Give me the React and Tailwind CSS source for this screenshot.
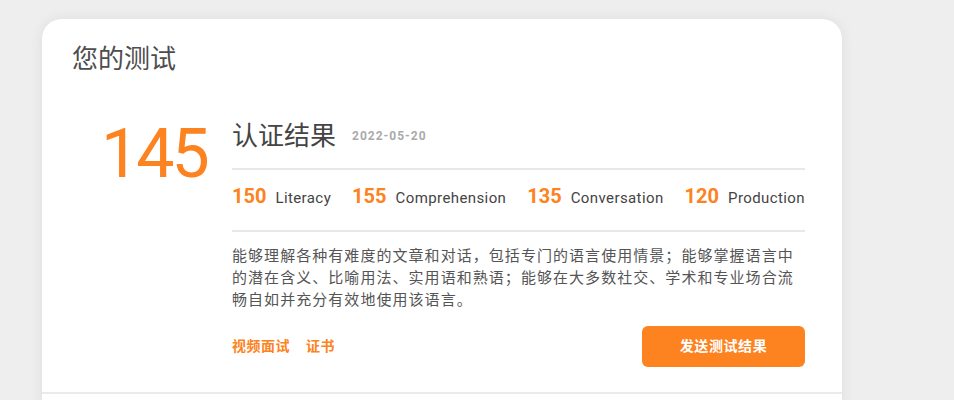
export default function App() {
  const scores = [
    { n: 150, label: 'Literacy' },
    { n: 155, label: 'Comprehension' },
    { n: 135, label: 'Conversation' },
    { n: 120, label: 'Production' },
  ];

  return (
    <div
      className="min-h-[400px] bg-[#eeeeee] pt-[19px] pl-[42px] overflow-hidden"
      style={{ fontFamily: 'Roboto, "Noto Sans CJK SC", sans-serif' }}
    >
      <div className="w-[800px] bg-white rounded-t-[20px] shadow-[0_0_14px_rgba(0,0,0,0.07)]">
        <div className="px-[30px] pt-[22px] pb-[25px]">
          <h1 className="text-[26px] leading-[36px] text-[#4d4d4d]">您的测试</h1>

          <div className="flex pl-[29px] pr-[7px] mt-[41px]">
            <div className="w-[131px] shrink-0">
              <div className="text-[68px] leading-none font-normal text-[#fd8220] tracking-[-3px] mt-[2px]">
                145
              </div>
            </div>

            <div className="flex-1">
              <div className="flex items-center">
                <h2 className="text-[26px] leading-[36px] text-[#444]">认证结果</h2>
                <span className="ml-[16px] text-[12px] font-bold tracking-[1px] text-[#aaaaaa]">2022-05-20</span>
              </div>

              <div className="mt-[14px] border-t-2 border-[#e8e8e8] border-b-2 pt-[12px] pb-[18px] flex justify-between">
                {scores.map((s) => (
                  <div key={s.label} className="flex items-baseline leading-[28px]">
                    <span className="text-[20px] font-bold text-[#fd8220]">{s.n}</span>
                    <span className="ml-[9px] text-[15px] tracking-[0.4px] text-[#444]">{s.label}</span>
                  </div>
                ))}
              </div>

              <p className="mt-[13px] text-[15px] leading-[22px] tracking-[1.05px] text-[#555]">
                能够理解各种有难度的文章和对话，包括专门的语言使用情景；能够掌握语言中的潜在含义、比喻用法、实用语和熟语；能够在大多数社交、学术和专业场合流畅自如并充分有效地使用该语言。
              </p>

              <div className="mt-[15px] flex items-center justify-between">
                <div className="flex gap-[16px] text-[14px] font-bold tracking-[0.5px] text-[#fd8220]">
                  <a href="#">视频面试</a>
                  <a href="#">证书</a>
                </div>
                <button className="w-[163px] h-[41px] rounded-[6px] bg-[#fd8220] text-white text-[14px] font-bold tracking-[0.6px]">
                  发送测试结果
                </button>
              </div>
            </div>
          </div>
        </div>
        <div className="border-t-2 border-[#ebebeb] h-[40px]"></div>
      </div>
    </div>
  );
}
